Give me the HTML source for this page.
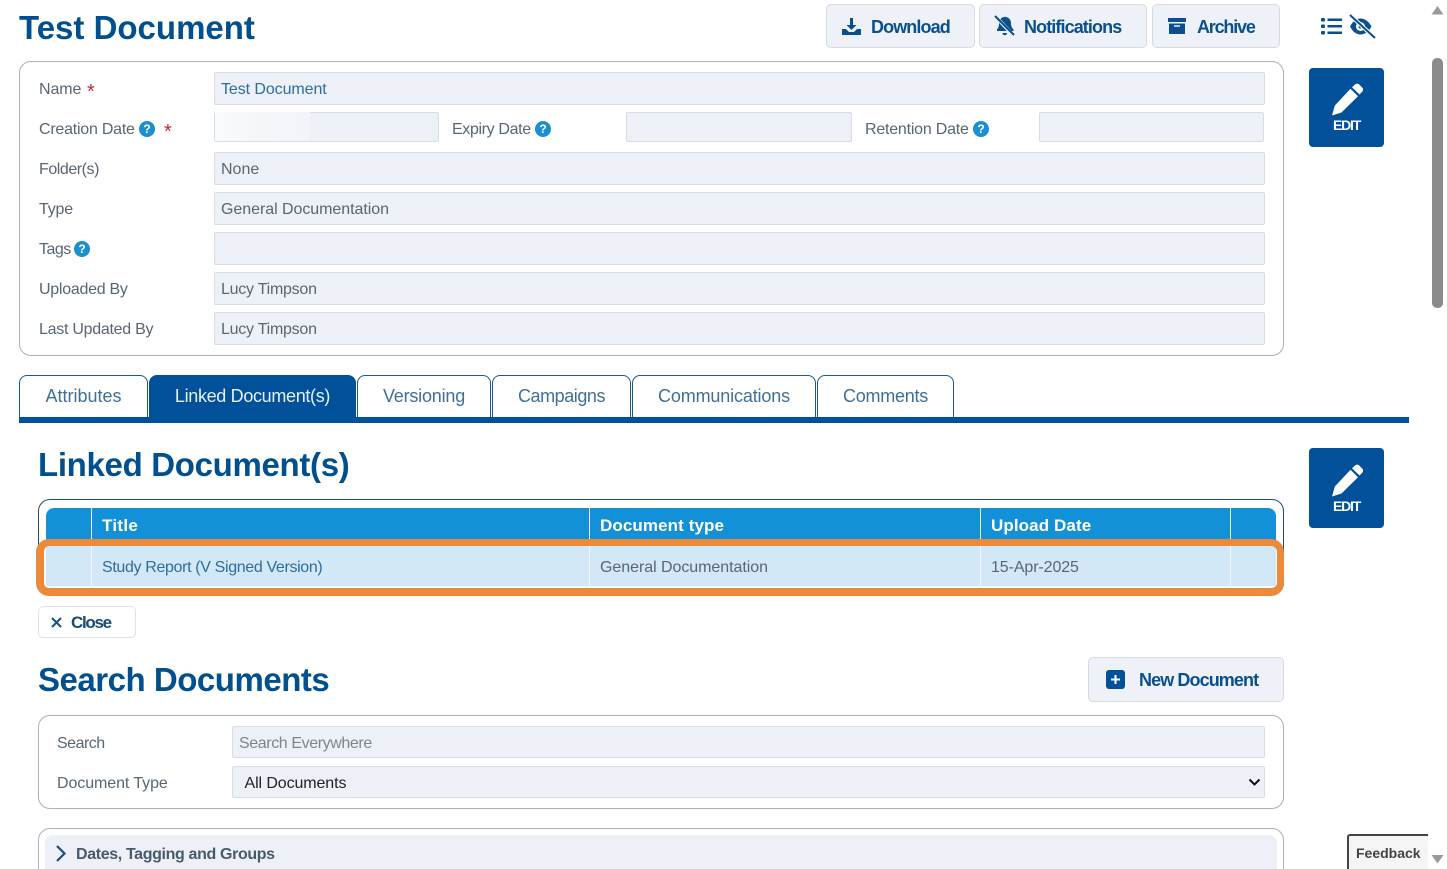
<!DOCTYPE html>
<html><head><meta charset="utf-8"><title>Test Document</title>
<style>
html,body{margin:0;padding:0;background:#fff;width:1447px;height:869px;overflow:hidden}
body{position:relative;font-family:"Liberation Sans",sans-serif;font-size:16px;color:#5a6672}
.a{position:absolute;box-sizing:border-box}
.t{position:absolute;white-space:nowrap;line-height:20px}
.h{font-weight:700;font-size:33px;line-height:40px;color:#00508f}
.btn{position:absolute;box-sizing:border-box;background:#eef2f8;border:1px solid #d6dbe2;border-radius:5px}
.bt{position:absolute;white-space:nowrap;font-weight:700;font-size:18px;line-height:22px;color:#0a4f8f;letter-spacing:-.9px}
.f{position:absolute;box-sizing:border-box;background:#edf0f7;border:1px solid #d8dde5;border-radius:2px;height:33px;color:#5a6672;padding-left:6px;line-height:33px}
.p{position:absolute;box-sizing:border-box;border:1px solid #a9b0b7;border-radius:12px;background:#fff}
.q{position:absolute;width:16px;height:16px;border-radius:50%;background:#1a8fd1;color:#fff;font-size:12px;font-weight:700;text-align:center;line-height:16px}
.s{position:absolute;color:#c8273a;font-size:20px;line-height:20px}
.tab{position:absolute;box-sizing:border-box;top:375px;height:43px;border:1px solid #1d5a85;border-bottom:0;border-radius:8px 8px 0 0;background:#fff;color:#40709a;font-size:18px;line-height:40px;text-align:center}
.sep{position:absolute;width:1px;background:#f2f8fd}
.edit{position:absolute;left:1309px;width:75px;background:#00509a;border-radius:4px}
.edit span{position:absolute;left:0;width:75px;text-align:center;color:#fff;font-weight:700;font-size:14px;letter-spacing:-1.200px;line-height:16px}
.th{color:#fff;font-weight:700;font-size:17px;letter-spacing:.1px}
</style></head><body>

<div class="t h" style="left:19px;top:8px">Test Document</div>

<div class="btn" style="left:826px;top:4px;width:149px;height:44px"></div>
<svg class="a" style="left:842px;top:17px" width="19" height="19" viewBox="0 0 19 19"><path d="M8 1h3v7h3.500L9.500 13 4.500 8H8z" fill="#0a4f8f"/><path d="M0 12h4l3 3h5l3-3h4v6H0z" fill="#0a4f8f"/></svg>
<div class="bt" style="left:871px;top:16px">Download</div>

<div class="btn" style="left:979px;top:4px;width:168px;height:44px"></div>
<svg class="a" style="left:993px;top:15px" width="24" height="22" viewBox="0 0 24 22"><path d="M11 2a2 2 0 0 1 2 0c3 .5 5 3 5 6 0 3 1 5 2.500 6.500V16H4v-1.500C6 12 6 10 6 8c0-3 2-5.500 5-6z" fill="#0a4f8f"/><path d="M9.500 18h4.500a2.200 2.200 0 0 1-4.500 0z" fill="#0a4f8f"/><path d="M2 1l18 19" stroke="#eef2f8" stroke-width="3.500"/><path d="M2 1l19 19" stroke="#0a4f8f" stroke-width="2"/></svg>
<div class="bt" style="left:1024px;top:16px">Notifications</div>

<div class="btn" style="left:1152px;top:4px;width:128px;height:44px"></div>
<svg class="a" style="left:1168px;top:17px" width="18" height="17" viewBox="0 0 18 17"><path d="M0 1h18v4H0zM1 6.500h16V17H1z" fill="#0a4f8f"/><path d="M6 9h6" stroke="#eef2f8" stroke-width="1.500"/></svg>
<div class="bt" style="left:1197px;top:16px;letter-spacing:-1.200px">Archive</div>

<svg class="a" style="left:1320px;top:14px" width="58" height="26" viewBox="0 0 58 26">
<g fill="#0a4f8f"><rect x="1" y="4" width="4" height="3.500" rx="1"/><rect x="1" y="10.500" width="4" height="3.500" rx="1"/><rect x="1" y="17" width="4" height="3.500" rx="1"/><rect x="7.500" y="4.500" width="14.500" height="2.500"/><rect x="7.500" y="11" width="14.500" height="2.500"/><rect x="7.500" y="17.500" width="14.500" height="2.500"/></g>
<path d="M30 12.500c3-5.500 6.500-8 10.500-8s8 2.500 11 8c-3 5.500-7 8-11 8s-7.500-2.500-10.500-8z" fill="#0a4f8f"/><circle cx="40.500" cy="12.500" r="4.500" fill="#fff"/><circle cx="40.500" cy="12.500" r="2" fill="#0a4f8f"/><path d="M30 1l25 23" stroke="#fff" stroke-width="4"/><path d="M30 1l25 23" stroke="#0a4f8f" stroke-width="2"/></svg>

<div class="a" style="left:1432px;top:58px;width:11px;height:250px;background:#8b8b8b;border-radius:5px"></div>
<svg class="a" style="left:1431px;top:5px" width="13" height="10"><path d="M6.500 1L12.500 9.500H.5z" fill="#9a9a9a"/></svg>
<svg class="a" style="left:1431px;top:854px" width="13" height="10"><path d="M.5 1h12L6.500 9.500z" fill="#9a9a9a"/></svg>

<div class="edit" style="top:68px;height:79px">
<svg class="a" style="left:22px;top:15px" width="33" height="34" viewBox="0 0 33 34"><path d="M24 1.500c1.500-1.200 3-1 4.200 0l3 3c1.200 1.300 1.200 2.800 0 4.200L28.500 11.500 21 4.200z" fill="#fff"/><path d="M19.500 5.800l7.500 7.400L10.500 29.500 1 32.500l2.800-10z" fill="#fff"/></svg>
<span style="top:49px">EDIT</span></div>

<div class="p" style="left:19px;top:61px;width:1265px;height:295px"></div>
<div class="t" style="left:39px;top:80px;letter-spacing:-.1px">Name</div><div class="s" style="left:87px;top:82px">*</div>
<div class="t" style="left:39px;top:120px;letter-spacing:-.23px">Creation Date</div><div class="q" style="left:139px;top:121px">?</div><div class="s" style="left:164px;top:122px">*</div>
<div class="t" style="left:39px;top:160px;letter-spacing:-.45px">Folder(s)</div>
<div class="t" style="left:39px;top:200px;letter-spacing:-.2px">Type</div>
<div class="t" style="left:39px;top:240px;letter-spacing:-.5px">Tags</div><div class="q" style="left:74px;top:241px">?</div>
<div class="t" style="left:39px;top:280px;letter-spacing:-.27px">Uploaded By</div>
<div class="t" style="left:39px;top:320px;letter-spacing:-.27px">Last Updated By</div>

<div class="f" style="left:214px;top:72px;width:1051px;color:#2f6c9f;letter-spacing:-.08px">Test Document</div>
<div class="f" style="left:214px;top:112px;width:225px;height:30px"></div>
<div class="a" style="left:215px;top:112px;width:95px;height:29px;background:linear-gradient(90deg,#f8fafc 0,#f4f6fa 50%,#f2f4f9 100%)"></div>
<div class="t" style="left:452px;top:120px;letter-spacing:-.36px">Expiry Date</div><div class="q" style="left:535px;top:121px">?</div>
<div class="f" style="left:626px;top:112px;width:226px;height:30px"></div>
<div class="t" style="left:865px;top:120px;letter-spacing:-.22px">Retention Date</div><div class="q" style="left:973px;top:121px">?</div>
<div class="f" style="left:1039px;top:112px;width:225px;height:30px"></div>
<div class="f" style="left:214px;top:152px;width:1051px">None</div>
<div class="f" style="left:214px;top:192px;width:1051px;letter-spacing:-.05px">General Documentation</div>
<div class="f" style="left:214px;top:232px;width:1051px"></div>
<div class="f" style="left:214px;top:272px;width:1051px;letter-spacing:-.25px">Lucy Timpson</div>
<div class="f" style="left:214px;top:312px;width:1051px;letter-spacing:-.25px">Lucy Timpson</div>

<div class="tab" style="left:19px;width:129px">Attributes</div>
<div class="tab" style="left:149px;width:207px;background:#00509a;border-color:#00509a;color:#e6f0f8;letter-spacing:-.33px">Linked Document(s)</div>
<div class="tab" style="left:357px;width:134px;letter-spacing:-.2px">Versioning</div>
<div class="tab" style="left:492px;width:139px;letter-spacing:-.45px">Campaigns</div>
<div class="tab" style="left:632px;width:184px;letter-spacing:-.15px">Communications</div>
<div class="tab" style="left:817px;width:137px;letter-spacing:-.25px">Comments</div>
<div class="a" style="left:19px;top:417px;width:1390px;height:6px;background:#00509a"></div>

<div class="t h" style="left:38px;top:445px;letter-spacing:-.32px">Linked Document(s)</div>
<div class="edit" style="top:448px;height:80px">
<svg class="a" style="left:22px;top:16px" width="33" height="34" viewBox="0 0 33 34"><path d="M24 1.500c1.500-1.200 3-1 4.200 0l3 3c1.200 1.300 1.200 2.800 0 4.200L28.500 11.500 21 4.200z" fill="#fff"/><path d="M19.500 5.800l7.500 7.400L10.500 29.500 1 32.500l2.800-10z" fill="#fff"/></svg>
<span style="top:50px">EDIT</span></div>

<div class="a" style="left:38px;top:499px;width:1246px;height:96px;border:1px solid #1f4e6d;border-radius:12px"></div>
<div class="a" style="left:46px;top:508px;width:1230px;height:38px;background:#1290d8;border-radius:8px 8px 0 0"></div>
<div class="a" style="left:46px;top:546px;width:1230px;height:40px;background:#d2e8f7"></div>
<div class="sep" style="left:91px;top:508px;height:78px"></div>
<div class="sep" style="left:589px;top:508px;height:78px"></div>
<div class="sep" style="left:980px;top:508px;height:78px"></div>
<div class="sep" style="left:1230px;top:508px;height:78px"></div>
<div class="t th" style="left:102px;top:516px;letter-spacing:.3px">Title</div>
<div class="t th" style="left:600px;top:516px;letter-spacing:.1px">Document type</div>
<div class="t th" style="left:991px;top:516px">Upload Date</div>
<div class="t" style="left:102px;top:558px;color:#2f6c9f;letter-spacing:-.35px">Study Report (V Signed Version)</div>
<div class="t" style="left:600px;top:558px;letter-spacing:-.05px">General Documentation</div>
<div class="t" style="left:991px;top:558px;letter-spacing:-.1px">15-Apr-2025</div>
<div class="a" style="left:36px;top:539px;width:1248px;height:57px;border-style:solid;border-color:#ea8a3a;border-width:7px 7px 8px 8px;border-radius:13px"></div>

<div class="btn" style="left:38px;top:606px;width:98px;height:32px;background:#fff;border-color:#dfe3e8"></div>
<svg class="a" style="left:50px;top:616px" width="13" height="13"><path d="M2 2l9 9M11 2l-9 9" stroke="#1a4f80" stroke-width="2"/></svg>
<div class="bt" style="left:71px;top:612px;color:#1a4a78;font-size:17px;letter-spacing:-1.300px">Close</div>

<div class="t h" style="left:38px;top:660px;letter-spacing:-.48px">Search Documents</div>
<div class="btn" style="left:1088px;top:657px;width:196px;height:45px"></div>
<div class="a" style="left:1106px;top:670px;width:19px;height:19px;background:#00509a;border-radius:3px"></div>
<svg class="a" style="left:1106px;top:670px" width="19" height="19"><path d="M9.500 5v9M5 9.500h9" stroke="#fff" stroke-width="2"/></svg>
<div class="bt" style="left:1139px;top:669px">New Document</div>

<div class="p" style="left:38px;top:715px;width:1246px;height:94px"></div>
<div class="t" style="left:57px;top:734px;letter-spacing:-.5px">Search</div>
<div class="t" style="left:57px;top:774px;letter-spacing:-.08px">Document Type</div>
<div class="f" style="left:232px;top:726px;width:1033px;height:32px;color:#7b8590;line-height:32px;padding-top:1px;letter-spacing:-.4px">Search Everywhere</div>
<div class="f" style="left:232px;top:766px;width:1033px;height:32px;color:#222;padding-left:11.500px;padding-top:1px;line-height:32px;letter-spacing:-.1px">All Documents</div>
<svg class="a" style="left:1248px;top:778px" width="13" height="9"><path d="M1.500 1.500l5 5 5-5" fill="none" stroke="#111" stroke-width="2"/></svg>

<div class="p" style="left:38px;top:828px;width:1246px;height:60px"></div>
<div class="a" style="left:45px;top:835px;width:1232px;height:50px;background:#edf0f7;border-radius:8px"></div>
<svg class="a" style="left:55px;top:844px" width="13" height="19"><path d="M2 2l7.500 7.500L2 17" fill="none" stroke="#1d4f7c" stroke-width="2.200"/></svg>
<div class="t" style="left:76px;top:845px;font-weight:700;color:#4b5a6b;letter-spacing:-.36px">Dates, Tagging and Groups</div>

<div class="a" style="left:1347px;top:834px;width:81px;height:40px;background:#f5f5f5;border-left:2px solid #444;border-top:2px solid #444;border-radius:3px 0 0 0"></div>
<div class="t" style="left:1356px;top:843px;font-weight:700;font-size:14px;color:#444">Feedback</div>
</body></html>
